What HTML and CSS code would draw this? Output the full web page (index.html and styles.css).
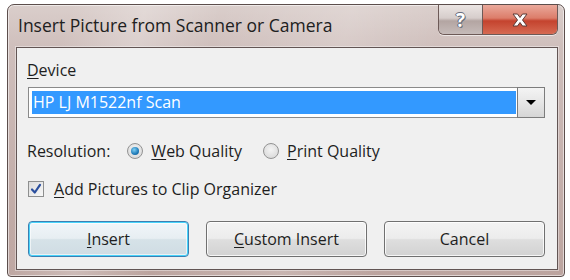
FILE: index.html
```html
<!DOCTYPE html>
<html lang="en">
<head>
    <meta charset="UTF-8">
    <title>Insert Picture from Scanner or Camera</title>
    <link rel="stylesheet" href="styles.css">
</head>
<body>

<div class="window">
    <div class="titlebar">
        <span class="title">Insert Picture from Scanner or Camera</span>
        <div class="caption-btns">
            <div class="cap-btn help">?</div>
            <div class="cap-btn close">
                <svg width="20" height="16" viewBox="0 0 20 16">
                    <path d="M3 2 L7.5 2 L10 5.5 L12.5 2 L17 2 L12.5 8 L17 14 L12.5 14 L10 10.5 L7.5 14 L3 14 L7.5 8 Z" fill="#fff" stroke="#5a3a36" stroke-width="1" stroke-linejoin="round"/>
                </svg>
            </div>
        </div>
    </div>

    <div class="client">
        <div class="label"><u>D</u>evice</div>
        <div class="combo">
            <div class="combo-value">HP LJ M1522nf Scan</div>
            <div class="combo-arrow"><span class="tri"></span></div>
        </div>

        <div class="res-row">
            <span class="res-label">Resolution:</span>
            <span class="radio checked"><span class="dot"></span></span>
            <span class="opt"><u>W</u>eb Quality</span>
            <span class="radio"></span>
            <span class="opt"><u>P</u>rint Quality</span>
        </div>

        <div class="check-row">
            <span class="checkbox">
                <svg width="12" height="12" viewBox="0 0 12 12">
                    <path d="M2 6.5 L4.8 9.5 L10 1.8" fill="none" stroke="#2b4f9e" stroke-width="2.2" stroke-linecap="round" stroke-linejoin="round"/>
                </svg>
            </span>
            <span><u>A</u>dd Pictures to Clip Organizer</span>
        </div>

        <div class="buttons">
            <div class="btn default"><u>I</u>nsert</div>
            <div class="btn"><u>C</u>ustom Insert</div>
            <div class="btn">Cancel</div>
        </div>
    </div>
</div>

</body>
</html>
```

FILE: styles.css
```css
body {
    margin: 0;
    padding: 4px 5px 3px 7px;
    background-color: #fff;
    font-family: 'Open Sans', 'Noto Sans', sans-serif;
    font-size: 16px;
    color: #1e1e1e;
}
u {
    text-decoration-thickness: 1px;
    text-underline-offset: 2px;
}
.window {
    width: 558px;
    height: 273px;
    box-sizing: border-box;
    border: 1px solid #5c4e4c;
    border-radius: 7px 7px 4px 4px;
    background:
        linear-gradient(105deg, rgba(255, 255, 255, 0) 10%, rgba(255, 255, 255, 0.25) 22%, rgba(255, 255, 255, 0) 34%, rgba(255, 255, 255, 0.18) 55%, rgba(255, 255, 255, 0) 70%),
        linear-gradient(#dacecb 0, #cfbfbc 42px, #bca49f 100%);
    box-shadow: inset 0 0 0 1px rgba(255, 255, 255, 0.55);
    display: flex;
    flex-direction: column;
    padding: 0 6px 6px 8px;
}
.titlebar {
    height: 42px;
    display: flex;
    justify-content: space-between;
    align-items: flex-start;
}
.title {
    padding-top: 9px;
    padding-left: 2px;
    font-size: 17.5px;
    line-height: 22px;
    color: #202020;
}
.caption-btns {
    display: flex;
    border: 1px solid #6d5a57;
    border-top: none;
    border-radius: 0 0 6px 6px;
    overflow: hidden;
    box-shadow: 0 1px 0 rgba(255, 255, 255, 0.6);
}
.cap-btn {
    height: 29px;
    display: flex;
    align-items: center;
    justify-content: center;
}
.help {
    width: 43px;
    background: linear-gradient(#ebe5e3 0%, #d6cdcb 45%, #b3a5a2 55%, #c6bbb9 100%);
    border-right: 1px solid #6d5a57;
    font-weight: bold;
    font-size: 19px;
    color: #fff;
    text-shadow: 0 0 1px #4f5566, 1px 1px 0 #6a7080, -1px 0 0 #6a7080, 0 -1px 0 #6a7080;
}
.close {
    width: 74px;
    background: linear-gradient(#eaa99b 0%, #dc7d6a 45%, #c4432e 55%, #d66a52 100%);
}
.client {
    height: 223px;
    border: 1px solid #625554;
    background-color: #f0f0f0;
    box-shadow: 0 0 0 1px rgba(255, 255, 255, 0.4);
    padding: 12px 12px 0 10px;
    box-sizing: border-box;
    line-height: 20px;
}
.combo {
    margin: 7px 0 0 1px;
    height: 31px;
    display: flex;
    border: 1px solid #8a8a8a;
    background-color: #fff;
    box-sizing: border-box;
}
.combo-value {
    flex: 1;
    margin: 3px 1px 3px 3px;
    background-color: #3399ff;
    color: #fff;
    line-height: 23px;
    padding-left: 1px;
}
.combo-arrow {
    width: 26px;
    margin: -1px -1px -1px 0;
    border: 1px solid #7c7c7c;
    background: linear-gradient(#f4f4f4, #e6e6e6 50%, #d6d6d6);
    display: flex;
    align-items: center;
    justify-content: center;
}
.tri {
    width: 0;
    height: 0;
    border-left: 5px solid transparent;
    border-right: 5px solid transparent;
    border-top: 5px solid #000;
}
.res-row {
    margin-top: 23px;
    display: flex;
    align-items: center;
}
.res-label {
    margin-right: 17px;
}
.radio {
    width: 16px;
    height: 16px;
    border-radius: 50%;
    border: 1px solid #939393;
    background: radial-gradient(circle at 50% 40%, #f4f4f4, #d4d4d4);
    box-sizing: border-box;
    display: flex;
    align-items: center;
    justify-content: center;
    margin-right: 8px;
}
.radio .dot {
    width: 8px;
    height: 8px;
    border-radius: 50%;
    background: radial-gradient(circle at 40% 35%, #7fd0f4, #1f7ab8 60%, #115a8f);
}
.opt {
    margin-right: 21px;
}
.check-row {
    margin-top: 18px;
    display: flex;
    align-items: center;
}
.checkbox {
    width: 16px;
    height: 16px;
    margin: 0 10px 0 1px;
    border: 1px solid #8e8f8f;
    background: linear-gradient(135deg, #dcdcdc, #f8f8f8);
    box-sizing: border-box;
    display: flex;
    align-items: center;
    justify-content: center;
}
.buttons {
    margin: 22px 0 0 1px;
    display: flex;
    gap: 17px;
}
.btn {
    width: 161px;
    height: 36px;
    border: 1px solid #707070;
    border-radius: 4px;
    background: linear-gradient(#f3f3f3 0%, #ececec 48%, #dedede 52%, #d2d2d2 100%);
    box-shadow: inset 0 0 0 1px rgba(255, 255, 255, 0.8);
    box-sizing: border-box;
    display: flex;
    align-items: center;
    justify-content: center;
}
.btn.default {
    border-color: #3c7fb1;
    box-shadow: inset 0 0 0 1px #48d4fb, inset 0 0 0 2px rgba(255, 255, 255, 0.6);
    background: linear-gradient(#f0f6f9 0%, #e7eef2 48%, #d6e2e8 52%, #cfdce3 100%);
}
```
